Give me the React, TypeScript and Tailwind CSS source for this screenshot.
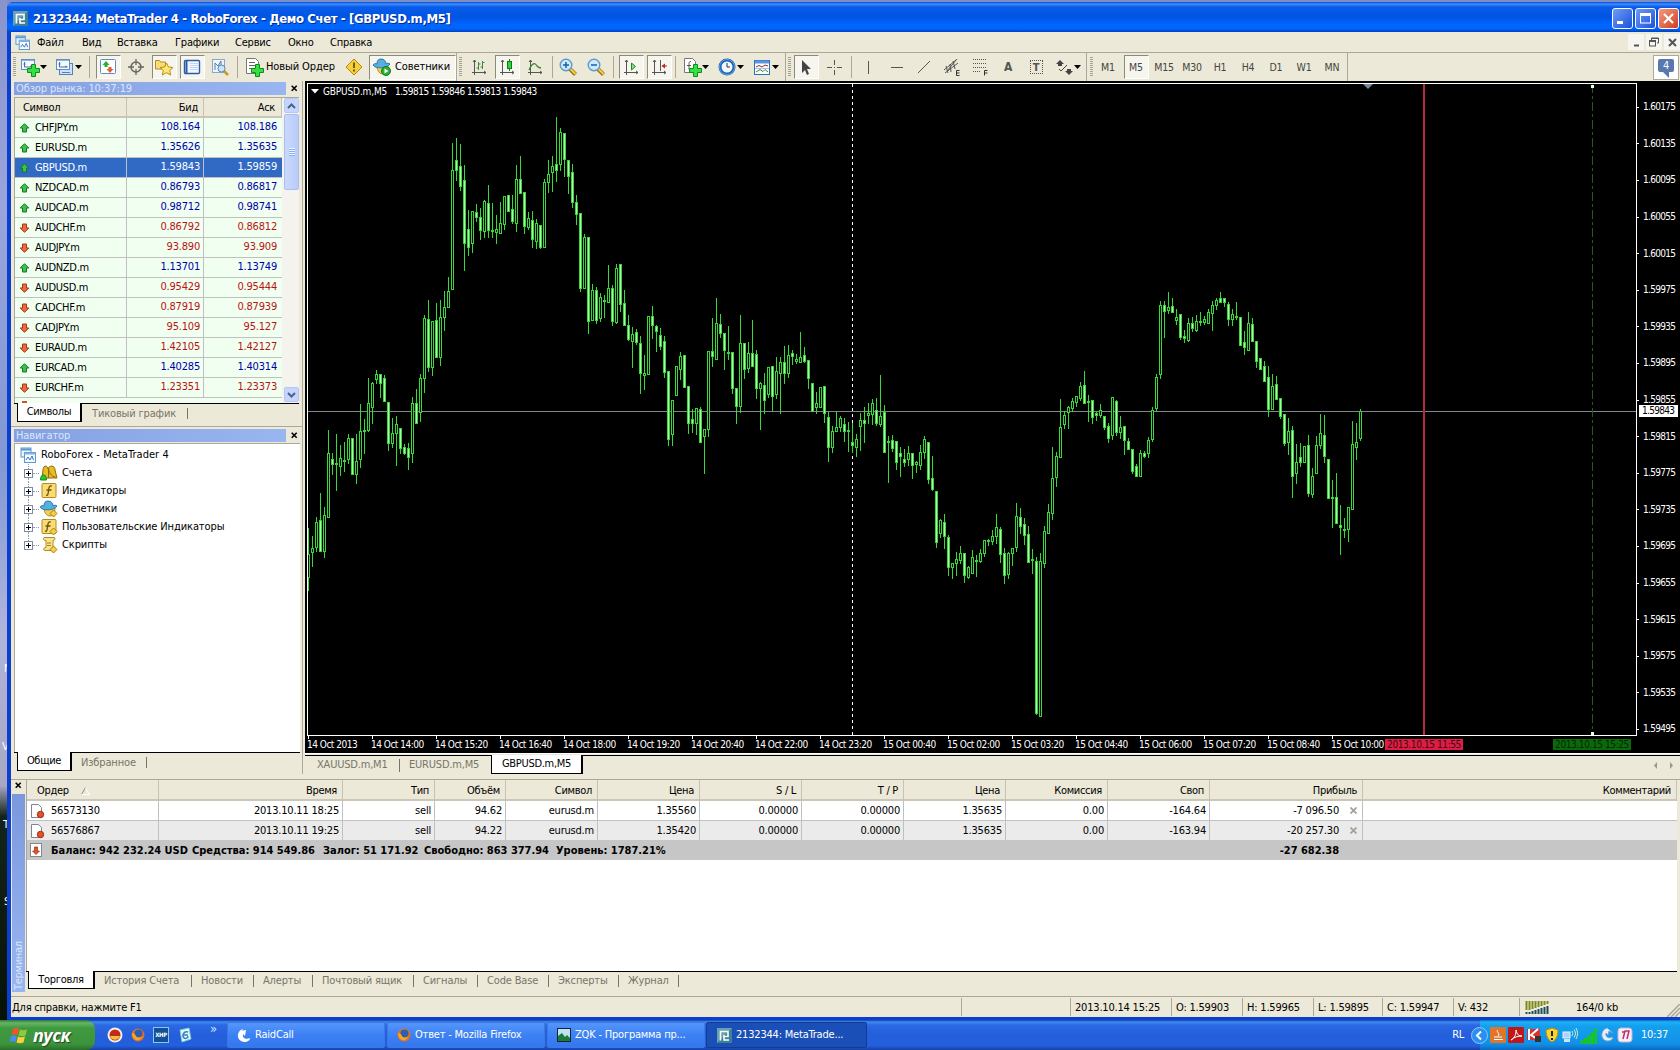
import React from "react";
import clsx from "clsx";

// [high, body top, body bottom, low, down bar]
const bars: number[][] = [
    [528, 554, 577, 590, 0], [536, 548, 552, 566, 0], [517, 522, 547, 551, 0], [493, 520, 551, 551, 1], [507, 515, 551, 557, 0],
    [430, 453, 517, 517, 0], [453, 459, 464, 474, 1], [434, 463, 464, 490, 0], [445, 458, 466, 475, 0], [442, 460, 461, 471, 0],
    [434, 438, 459, 463, 0], [438, 438, 474, 474, 1], [434, 461, 474, 483, 0], [404, 431, 459, 467, 0], [419, 430, 431, 453, 0],
    [378, 403, 430, 431, 0], [382, 383, 407, 423, 0], [370, 374, 379, 383, 0], [374, 374, 383, 397, 1], [375, 378, 401, 401, 1],
    [402, 402, 443, 450, 1], [418, 433, 443, 447, 0], [416, 424, 433, 465, 0], [428, 428, 448, 453, 1], [444, 447, 453, 454, 1],
    [443, 448, 457, 469, 1], [397, 403, 453, 462, 0], [389, 403, 423, 423, 1], [374, 378, 412, 421, 0], [315, 318, 378, 392, 0],
    [300, 319, 367, 371, 1], [321, 321, 367, 375, 0], [303, 320, 357, 357, 1], [300, 317, 357, 365, 0], [291, 307, 317, 330, 0],
    [277, 291, 307, 307, 0], [143, 170, 289, 289, 0], [138, 160, 170, 180, 1], [144, 166, 186, 190, 1], [165, 180, 243, 270, 1],
    [210, 229, 247, 255, 1], [211, 211, 243, 252, 0], [204, 212, 217, 221, 1], [208, 217, 230, 239, 1], [200, 201, 231, 237, 0],
    [185, 203, 230, 237, 1], [203, 230, 231, 237, 0], [215, 229, 232, 243, 0], [202, 223, 233, 233, 0], [196, 196, 224, 229, 0],
    [195, 195, 211, 211, 1], [195, 209, 221, 223, 1], [165, 179, 223, 231, 0], [156, 179, 193, 193, 1], [192, 192, 226, 233, 1],
    [212, 218, 227, 229, 0], [211, 220, 239, 247, 1], [219, 223, 241, 248, 0], [225, 225, 247, 248, 1], [179, 182, 247, 247, 0],
    [160, 174, 182, 192, 0], [156, 166, 172, 191, 0], [117, 164, 170, 181, 1], [128, 132, 164, 170, 0], [133, 133, 159, 176, 1],
    [160, 160, 176, 193, 1], [164, 172, 202, 207, 1], [195, 202, 214, 224, 1], [213, 213, 288, 291, 1], [234, 237, 288, 288, 0],
    [237, 237, 321, 333, 1], [284, 290, 320, 320, 0], [287, 290, 320, 323, 1], [293, 297, 318, 321, 0], [295, 300, 301, 317, 0],
    [265, 288, 302, 302, 0], [285, 288, 321, 325, 1], [264, 268, 322, 323, 0], [264, 264, 304, 311, 1], [290, 303, 325, 325, 1],
    [315, 325, 339, 340, 1], [327, 334, 341, 367, 0], [329, 332, 342, 344, 1], [336, 343, 373, 393, 1], [355, 373, 375, 389, 0],
    [316, 316, 374, 374, 0], [306, 316, 325, 338, 1], [325, 326, 331, 351, 1], [328, 335, 346, 349, 1], [336, 341, 372, 377, 1],
    [371, 371, 439, 445, 1], [400, 400, 434, 445, 0], [366, 366, 395, 395, 0], [352, 356, 369, 379, 0], [355, 355, 387, 387, 1],
    [386, 386, 423, 433, 1], [409, 419, 423, 432, 1], [408, 408, 423, 434, 0], [407, 409, 442, 442, 1], [429, 429, 436, 473, 0],
    [351, 351, 429, 436, 0], [318, 351, 356, 366, 1], [298, 323, 359, 359, 0], [314, 324, 333, 337, 1], [333, 333, 350, 369, 1],
    [326, 352, 353, 359, 0], [352, 352, 388, 393, 1], [388, 388, 406, 423, 1], [315, 343, 406, 412, 0], [343, 343, 369, 378, 1],
    [342, 353, 368, 372, 0], [320, 353, 366, 366, 1], [350, 354, 388, 398, 1], [382, 383, 388, 429, 0], [373, 385, 400, 413, 1],
    [367, 367, 394, 397, 0], [366, 366, 396, 410, 1], [357, 371, 394, 398, 0], [357, 362, 373, 413, 0], [346, 362, 373, 383, 1],
    [345, 355, 373, 377, 0], [350, 353, 356, 364, 1], [354, 359, 361, 363, 0], [332, 357, 362, 362, 0], [347, 355, 361, 362, 1],
    [360, 360, 378, 388, 1], [383, 383, 411, 411, 1], [392, 403, 407, 413, 0], [387, 387, 407, 407, 0], [386, 386, 413, 422, 1],
    [412, 417, 447, 461, 1], [426, 431, 447, 452, 0], [412, 427, 431, 431, 0], [416, 418, 427, 431, 0], [418, 424, 431, 441, 1],
    [422, 430, 431, 451, 0], [423, 442, 445, 452, 1], [434, 439, 447, 456, 0], [413, 420, 426, 450, 0], [407, 420, 423, 442, 1],
    [403, 413, 415, 423, 0], [399, 403, 414, 424, 0], [398, 410, 423, 425, 1], [375, 416, 424, 426, 0], [405, 412, 452, 452, 1],
    [436, 441, 442, 482, 0], [435, 440, 448, 451, 1], [441, 441, 462, 469, 1], [447, 453, 456, 476, 1], [449, 459, 462, 466, 1],
    [446, 453, 459, 465, 0], [453, 453, 465, 478, 1], [461, 462, 464, 472, 0], [445, 452, 465, 469, 0], [436, 439, 452, 458, 0],
    [442, 442, 479, 483, 1], [456, 478, 489, 490, 1], [491, 491, 542, 547, 1], [519, 520, 533, 537, 0], [514, 522, 536, 548, 1],
    [535, 537, 567, 575, 1], [563, 563, 567, 578, 0], [552, 559, 563, 575, 0], [546, 553, 560, 563, 0], [553, 553, 575, 582, 1],
    [566, 567, 577, 578, 0], [550, 557, 573, 573, 0], [555, 560, 561, 576, 0], [549, 553, 561, 562, 0], [540, 540, 553, 556, 0],
    [539, 540, 541, 545, 0], [530, 536, 541, 544, 0], [514, 527, 536, 543, 0], [527, 529, 554, 562, 1], [548, 553, 575, 583, 1],
    [552, 553, 574, 578, 0], [548, 548, 553, 565, 0], [503, 516, 547, 551, 0], [508, 517, 526, 533, 1], [518, 524, 535, 544, 1],
    [526, 534, 562, 562, 1], [549, 559, 560, 573, 0], [557, 561, 713, 714, 1], [553, 561, 716, 716, 0], [526, 531, 563, 567, 0],
    [504, 512, 533, 533, 0], [447, 478, 513, 519, 0], [452, 456, 477, 486, 0], [399, 427, 457, 457, 0], [411, 415, 424, 428, 0],
    [406, 407, 412, 428, 0], [398, 401, 408, 411, 0], [396, 396, 402, 406, 0], [382, 386, 398, 400, 0], [371, 385, 403, 403, 1],
    [395, 401, 402, 421, 0], [400, 400, 417, 423, 1], [412, 413, 415, 420, 1], [404, 410, 415, 417, 0], [416, 416, 427, 429, 1],
    [423, 426, 438, 442, 1], [397, 397, 435, 439, 0], [400, 401, 432, 435, 1], [416, 427, 432, 438, 0], [426, 426, 440, 454, 1],
    [438, 441, 449, 449, 1], [449, 449, 471, 473, 1], [464, 466, 476, 476, 1], [450, 453, 476, 476, 0], [451, 453, 456, 457, 1],
    [437, 440, 453, 457, 0], [407, 410, 439, 441, 0], [374, 377, 408, 411, 0], [301, 305, 374, 378, 0], [301, 305, 311, 337, 1],
    [292, 307, 310, 313, 0], [298, 306, 312, 312, 1], [309, 317, 320, 324, 0], [314, 314, 337, 339, 1], [330, 336, 338, 342, 1],
    [318, 323, 340, 341, 0], [317, 323, 328, 331, 1], [315, 321, 330, 331, 0], [312, 321, 322, 325, 0], [316, 319, 322, 324, 0],
    [309, 312, 323, 323, 0], [301, 305, 313, 330, 0], [298, 300, 305, 309, 0], [292, 298, 302, 302, 1], [298, 298, 302, 306, 1],
    [302, 304, 319, 325, 1], [309, 314, 319, 325, 0], [302, 316, 317, 319, 0], [317, 317, 345, 345, 1], [331, 342, 347, 354, 1],
    [312, 323, 350, 350, 0], [318, 324, 341, 341, 1], [341, 341, 361, 367, 1], [358, 358, 369, 369, 1], [361, 366, 381, 381, 1],
    [366, 377, 409, 416, 1], [374, 386, 409, 409, 0], [376, 384, 399, 399, 1], [398, 398, 416, 418, 1], [414, 414, 443, 445, 1],
    [418, 431, 442, 454, 0], [426, 430, 476, 497, 1], [444, 462, 473, 483, 0], [443, 457, 462, 466, 1], [446, 446, 462, 462, 0],
    [435, 445, 493, 496, 1], [468, 476, 494, 497, 0], [436, 445, 473, 473, 0], [414, 433, 445, 448, 0], [415, 435, 456, 462, 1],
    [459, 459, 498, 498, 1], [480, 497, 498, 527, 0], [473, 497, 523, 523, 1], [505, 525, 527, 554, 1], [518, 529, 530, 537, 0],
    [507, 507, 529, 541, 0], [421, 444, 509, 509, 0], [423, 442, 447, 459, 0], [409, 411, 438, 440, 0],
];

const times = [
    "14 Oct 14:00", "14 Oct 15:20", "14 Oct 16:40", "14 Oct 18:00", "14 Oct 19:20", "14 Oct 20:40", "14 Oct 22:00", "14 Oct 23:20",
    "15 Oct 00:40", "15 Oct 02:00", "15 Oct 03:20", "15 Oct 04:40", "15 Oct 06:00", "15 Oct 07:20", "15 Oct 08:40", "15 Oct 10:00",
];

const prices = [
    "1.60175", "1.60135", "1.60095", "1.60055", "1.60015", "1.59975", "1.59935", "1.59895", "1.59855",
    "1.59815", "1.59775", "1.59735", "1.59695", "1.59655", "1.59615", "1.59575", "1.59535", "1.59495",
];

const quotes = [
    { s: "CHFJPY.m", bid: "108.164", ask: "108.186", up: true },
    { s: "EURUSD.m", bid: "1.35626", ask: "1.35635", up: true },
    { s: "GBPUSD.m", bid: "1.59843", ask: "1.59859", up: true, sel: true },
    { s: "NZDCAD.m", bid: "0.86793", ask: "0.86817", up: true },
    { s: "AUDCAD.m", bid: "0.98712", ask: "0.98741", up: true },
    { s: "AUDCHF.m", bid: "0.86792", ask: "0.86812", up: false },
    { s: "AUDJPY.m", bid: "93.890", ask: "93.909", up: false },
    { s: "AUDNZD.m", bid: "1.13701", ask: "1.13749", up: true },
    { s: "AUDUSD.m", bid: "0.95429", ask: "0.95444", up: false },
    { s: "CADCHF.m", bid: "0.87919", ask: "0.87939", up: false },
    { s: "CADJPY.m", bid: "95.109", ask: "95.127", up: false },
    { s: "EURAUD.m", bid: "1.42105", ask: "1.42127", up: false },
    { s: "EURCAD.m", bid: "1.40285", ask: "1.40314", up: true },
    { s: "EURCHF.m", bid: "1.23351", ask: "1.23373", up: false },
];

const orderGrid = "grid grid-cols-[132px_184px_92px_71px_92px_102px_102px_102px_102px_102px_102px_153px_1fr]";

function Svg({ children, w = 20, h = 20 }: { children: React.ReactNode; w?: number; h?: number }) {
    return <svg width={w} height={h} viewBox={`0 0 ${w} ${h}`} className="shrink-0 block">{children}</svg>;
}

/* ---------- toolbar pieces ---------- */

const Plus = () => (
    <path transform="translate(7 7)" d="M4.500.500h4v4h4v4h-4v4h-4v-4h-4v-4h4z" fill="#34e044" stroke="#0f8c1a" />
);

const Caret = () => <Svg w={7} h={4}><path d="M0 0h7L3.500 4z" fill="#000" /></Svg>;

const Grip = () => (
    <div className="w-[3px] h-[20px] bg-[repeating-linear-gradient(#a5a292_0_1px,#ece9d8_1px_2px)]"></div>
);

function Slot({ on, children }: { on?: boolean; children: React.ReactNode }) {
    return (
        <div className="w-[28px] h-[28px] flex items-center justify-center shrink-0 text-[#444]">
            <div className={clsx("w-[25px] h-[24px] flex items-center justify-center", on && "bg-[#f6f5ee] border border-t-[#8d8a7c] border-l-[#8d8a7c] border-r-white border-b-white")}>
                {children}
            </div>
        </div>
    );
}

function Drop({ children }: { children: React.ReactNode }) {
    return (
        <div className="w-[35px] pl-px flex items-center shrink-0">
            {children}
            <Caret />
        </div>
    );
}

const Sep = ({ cls }: { cls: string }) => (
    <div className={clsx("h-[22px] shrink-0 flex", cls)}><div className="w-px h-full bg-[#aca899]"></div></div>
);

const ChartWin = () => (
    <>
        <rect x="1.5" y="2.5" width="13" height="10" fill="#f4f9ff" stroke="#5d8fc4" />
        <path d="M2 3.500h12" stroke="#8bb5e2" />
        <path d="M4.500 5v5h8M3.500 7h2M10 9l2 1" stroke="#4a6c92" fill="none" />
    </>
);

const Mag = ({ minus }: { minus?: boolean }) => (
    <Svg>
        <path d="M11.500 11.500l6 6" stroke="#9a7412" strokeWidth="4" />
        <path d="M12 11.500l5.500 5.500" stroke="#f5cf48" strokeWidth="2" />
        <circle cx="8" cy="8" r="5.800" fill="#cfe9fb" stroke="#5c9bce" strokeWidth="1.400" />
        <path d="M5 8h6" stroke="#1f68a8" strokeWidth="1.600" />
        {!minus && <path d="M8 5v6" stroke="#1f68a8" strokeWidth="1.600" />}
    </Svg>
);

const Axes = ({ children }: { children?: React.ReactNode }) => (
    <Svg>
        <path d="M5.500 3v15M3 15.500h14M4 5l1.500-2L7 5M15 14l2 1.500-2 1.500" stroke="#555" fill="none" />
        {children}
    </Svg>
);

const Hat = ({ badge = true }: { badge?: boolean }) => (
    <Svg>
        <path d="M5 9c0 5 3 8 6 8s5-3 5-8z" fill="#f3cf52" stroke="#b28a1c" />
        <path d="M1 8c2 4 14 4 17-1-1-1-3-1-4 0 0-3-2-5-5-5S5 4 5 7C3 6 2 7 1 8z" fill="#59aee0" stroke="#2f78ad" />
        {badge && <><circle cx="14" cy="14" r="4.500" fill="#27b030" stroke="#117a18" /><path d="M12.500 11.500v5l4-2.500z" fill="#fff" /></>}
        {!badge && <path d="M14.500 11l3.500 3.500-3.500 3.500-3.500-3.500z" fill="#f6cf45" stroke="#a57f18" />}
    </Svg>
);

const Terminals = ({ s = 16 }: { s?: number }) => (
    <svg width={s} height={s} viewBox="0 0 16 16" className="shrink-0 block">
        <rect x="1" y="1" width="10" height="9" fill="#eaf4ff" stroke="#5b97d0" />
        <path d="M1 2.500h10" stroke="#5b97d0" strokeWidth="2" />
        <rect x="4.500" y="5.500" width="11" height="10" fill="#f5faff" stroke="#5b97d0" />
        <path d="M4.500 6.500h11" stroke="#7fb0de" strokeWidth="2" />
        <path d="M6 13l2-3 2 3 2-4 1.500 4" stroke="#3c78b4" fill="none" />
    </svg>
);

const Logo = () => (
    <svg width="15" height="15" viewBox="0 0 15 15" className="shrink-0 block">
        <rect width="15" height="15" fill="#3f8096" />
        <path d="M0 0h15L0 15z" fill="#8fc3cf" opacity=".5" />
        <path d="M3.500 12.500V3.500h7.500v5H7M7 7v5h5" stroke="#fff" strokeWidth="1.600" fill="none" />
    </svg>
);

function Toolbar() {
    return (
        <div className="h-[28px] flex items-center bg-[#ece9d8] pl-[2px] text-[11px]">
            <div className="w-[6px] shrink-0"><Grip /></div>
            <Drop><Svg><ChartWin /><Plus /></Svg></Drop>
            <Drop>
                <Svg>
                    <rect x="4.500" y="6.500" width="13" height="11" fill="#cfe2f7" stroke="#4d83bf" />
                    <ChartWin />
                    <path d="M7 15.500h8" stroke="#4d83bf" />
                </Svg>
            </Drop>
            <Sep cls="w-[5px]" />
            <Slot on>
                <Svg>
                    <rect x="2.500" y="2.500" width="15" height="14" rx="1" fill="#fff" stroke="#5d8fc4" />
                    <path d="M8 4l3.500 4H9.500v2h-3V8h-2z" fill="#28b030" />
                    <path d="M12 16l3.500-4h-2v-2h-3v2h-2z" fill="#e0602c" />
                </Svg>
            </Slot>
            <Slot>
                <Svg>
                    <circle cx="10" cy="10" r="5" fill="none" stroke="#666" strokeWidth="1.500" />
                    <path d="M10 2v6M10 12v6M2 10h6M12 10h6" stroke="#666" strokeWidth="1.300" />
                </Svg>
            </Slot>
            <Slot on>
                <Svg>
                    <path d="M1.500 3.500h4l1 1.500h5v7h-10z" fill="#f8dc78" stroke="#b18d20" />
                    <path d="M12.500 6l2 4 4.500.500-3.300 3 1 4.500-4.200-2.300L8.300 18l1-4.500L6 10.500l4.500-.5z" fill="#ffe873" stroke="#b98d10" />
                </Svg>
            </Slot>
            <Slot on>
                <Svg>
                    <rect x="2.500" y="3.500" width="15" height="13" rx="1" fill="#f2f7ff" stroke="#2a5ca8" strokeWidth="1.400" />
                    <path d="M4.500 4v12" stroke="#2a5ca8" strokeWidth="2" />
                    <path d="M8 6.500h8M8 8.500h8M8 10.500h8M8 12.500h8" stroke="#c3d4ec" />
                </Svg>
            </Slot>
            <Slot>
                <Svg>
                    <rect x="2.500" y="2.500" width="12" height="13" fill="#eef4fb" stroke="#8ca7c6" />
                    <path d="M5 13V6l3 3 3-5v8" stroke="#5a7da6" fill="none" />
                    <path d="M14 14l4 4" stroke="#c99a28" strokeWidth="2.500" />
                    <circle cx="11.500" cy="11.500" r="3.500" fill="#c9e6fa" stroke="#4f89b9" />
                </Svg>
            </Slot>
            <Sep cls="w-[7px] pl-[3px]" />
            <div className="w-[97px] pl-[3px] flex items-center shrink-0">
                <Svg>
                    <path d="M2.500 1.500h9l3 3v12h-12z" fill="#fff" stroke="#777" />
                    <path d="M5 5.500h6M5 8.500h7M5 11.500h4" stroke="#666" />
                    <Plus />
                </Svg>
                <span className="pl-[2px] whitespace-nowrap tracking-[-0.1px]">Новый Ордер</span>
            </div>
            <div className="w-[31px] pl-[6px] shrink-0">
                <Svg>
                    <path d="M10 2l8 8-8 8-8-8z" fill="#f6cf3c" stroke="#b08a14" />
                    <path d="M10 5.500V11M10 12.500v2" stroke="#6b5208" strokeWidth="1.800" />
                </Svg>
            </div>
            <div className="w-[87px] h-[25px] pl-[2px] flex items-center shrink-0 bg-[#f6f5ee] border border-t-[#8d8a7c] border-l-[#8d8a7c] border-r-white border-b-white">
                <Hat />
                <span className="pl-[3px] whitespace-nowrap tracking-[-0.1px]">Советники</span>
            </div>
            <div className="w-[9px] h-full border-l border-[#aca899] flex items-center pl-[2px] shrink-0"><Grip /></div>
            <Slot><Axes><path d="M9.500 5v8M7.500 11h2M9.500 7h2M13.500 4v8M11.500 10h2M13.500 5.500h2" stroke="#3b8a3b" /></Axes></Slot>
            <Slot on><Axes><path d="M12.500 2v12" stroke="#0d7a16" /><rect x="10.500" y="4.500" width="4" height="7" fill="#35d040" stroke="#0d7a16" /></Axes></Slot>
            <Slot><Axes><path d="M4 13c3-7 6-8 8-4 1 1 3 2 4 2" stroke="#3b8a3b" fill="none" strokeWidth="1.300" /></Axes></Slot>
            <Sep cls="w-[5px] pl-[3px]" />
            <Slot><Mag /></Slot>
            <Slot><Mag minus /></Slot>
            <Sep cls="w-[7px] pl-[3px]" />
            <Slot on><Axes><path d="M10.500 6l4 3.500-4 3.500z" fill="#8be090" stroke="#1d8a26" /></Axes></Slot>
            <Slot on><Axes><path d="M11.500 3v11" stroke="#555" /><path d="M12.500 9l3.500-2.500v5z" fill="#b92424" /><path d="M15 9h3" stroke="#b92424" /></Axes></Slot>
            <Sep cls="w-[8px] pl-[2px]" />
            <Drop>
                <Svg>
                    <path d="M2.500 1.500h8l3 3v11h-11z" fill="#fff" stroke="#777" />
                    <path d="M9 4.500c-2 0-2 1-2 3v5M5 8.500h4" stroke="#555" fill="none" />
                    <Plus />
                </Svg>
            </Drop>
            <Drop>
                <Svg>
                    <circle cx="10" cy="10" r="7" fill="#f1f8ff" stroke="#1c63b4" strokeWidth="3" />
                    <circle cx="10" cy="10" r="7.500" fill="none" stroke="#5aa0e4" />
                    <path d="M10 6v4h3" stroke="#333" fill="none" />
                </Svg>
            </Drop>
            <div className="w-[34px] pl-px flex items-center shrink-0">
                <Svg>
                    <rect x="2.500" y="3.500" width="15" height="14" fill="#fff" stroke="#356fb3" />
                    <path d="M3 5h14" stroke="#5a96dc" strokeWidth="3" />
                    <path d="M4 10l3-1.500 3 1.500 3-2 3 1" stroke="#8d2f2f" fill="none" />
                    <path d="M4 15l4-2.500 3 2 2-2 3 2.500" stroke="#2c8a3a" fill="none" />
                    <path d="M3 11.500h14" stroke="#a7c3e6" />
                </Svg>
                <Caret />
            </div>
            <div className="w-[7px] h-full border-l border-[#aca899] flex items-center pl-[2px] shrink-0"><Grip /></div>
            <Slot on><Svg><path d="M6 3v13l3-3 2 5 2-1-2-5h4z" fill="#444" /></Svg></Slot>
            <Slot><Svg><path d="M10.500 3v5M10.500 13v5M3 10.500h5M13 10.500h5M10 10.500h1" stroke="#555" /></Svg></Slot>
            <Sep cls="w-[6px] pl-[3px]" />
            <Slot><Svg><path d="M10.500 4v13" stroke="#555" /></Svg></Slot>
            <Slot><Svg><path d="M5 10.500h12" stroke="#555" /></Svg></Slot>
            <Slot><Svg><path d="M4 16L16 4" stroke="#555" /></Svg></Slot>
            <Slot>
                <Svg>
                    <path d="M2 13L14 3M3 16L16 6M4 9l2 7M8 7l1 8M11 4l2 8M5 14L15 2" stroke="#555" />
                    <path d="M17.500 13.500h-3v5h3M14.500 16h3" stroke="#333" fill="none" />
                </Svg>
            </Slot>
            <Slot>
                <Svg>
                    <path d="M3 2.500h13M3 6.500h13M3 10.500h13M3 14.500h8" stroke="#555" strokeDasharray="1 1" />
                    <path d="M17.500 13.500h-3v5M14.500 16h3" stroke="#333" fill="none" />
                </Svg>
            </Slot>
            <Slot><span className="font-bold text-[12px] text-[#555]">A</span></Slot>
            <Slot>
                <span className="w-[13px] h-[14px] border border-dotted border-[#555] text-[11px] leading-[13px] text-center font-bold text-[#555]">T</span>
            </Slot>
            <div className="w-[36px] pl-[4px] flex items-center shrink-0">
                <Svg>
                    <path d="M6 3l4 4H8v2H4V7H2zM15 18l-4-4h2v-2h4v2h2z" fill="#444" />
                    <path d="M5 12l2 2 6-6" stroke="#444" fill="none" />
                </Svg>
                <Caret />
            </div>
            <div className="w-[8px] h-full border-l border-[#aca899] flex items-center pl-[3px] shrink-0"><Grip /></div>
            {["M1", "M5", "M15", "M30", "H1", "H4", "D1", "W1", "MN"].map((t) => (
                <Slot key={t} on={t === "M5"}><span className="text-[10.500px] tracking-[-0.2px]">{t}</span></Slot>
            ))}
            <div className="h-full w-px bg-[#aca899] ml-px"></div>
            <div className="ml-auto mr-px w-[26px] h-[25px] bg-white border border-[#aca899] flex items-center justify-center">
                <div className="relative w-[16px] h-[13px] bg-[#5878ae] rounded-[2px] text-white text-[11px] leading-[13px] text-center -mt-[3px]">
                    4
                    <div className="absolute left-[5px] top-[13px] border-[3px] border-transparent border-t-[#5878ae] border-r-[#5878ae]"></div>
                </div>
            </div>
        </div>
    );
}

/* ---------- left panels ---------- */

const Arrow = ({ up }: { up: boolean }) => (
    <svg width="11" height="10" viewBox="0 0 11 10" className="shrink-0 block">
        {up
            ? <path d="M5.500.700l4.300 4.300H7.500v4h-4V5H1.200z" fill="#3cc24c" stroke="#167a22" />
            : <path d="M5.500 9.300L9.800 5H7.500V1h-4v4H1.200z" fill="#ee6a3c" stroke="#a3381a" />}
    </svg>
);

function PanelTitle({ children }: { children: React.ReactNode }) {
    return (
        <div className="flex items-center h-[13px]">
            <div className="w-[272px] h-[13px] pl-[2px] bg-gradient-to-r from-[#84a0e2] to-[#9ab6f0] text-[#dbe6fb] text-[11px] leading-[13px] tracking-[-0.1px]">{children}</div>
            <div className="ml-[5px]"><CloseX /></div>
        </div>
    );
}

const CloseX = () => <Svg w={7} h={7}><path d="M.700 .7l5 5M5.700 .7l-5 5" stroke="#000" strokeWidth="1.600" /></Svg>;

function ScrollBtn({ up }: { up?: boolean }) {
    return (
        <div className="w-[15px] h-[15px] rounded-[2px] border border-[#b4c8f6] bg-[#c5d5fd] flex items-center justify-center">
            <Svg w={9} h={6}><path d={up ? "M1 5l3.500-3.500L8 5" : "M1 1l3.500 3.500L8 1"} stroke="#4d6185" strokeWidth="2" fill="none" /></Svg>
        </div>
    );
}

function MarketWatch() {
    return (
        <div className="h-[346px] pt-px pl-[3px] pr-[3px] flex flex-col border-b border-[#aca899]">
            <PanelTitle>Обзор рынка: 10:37:19</PanelTitle>
            <div className="mt-[2px] h-[306px] flex border-l border-t border-[#aca899] bg-[#f0fff0]">
                <div className="w-[267px] h-[305px] overflow-hidden shrink-0">
                    <div className="h-[20px] grid grid-cols-[112px_77px_1fr] bg-[#ece9d8] border-b-2 border-[#cbc7b8] leading-[20px]">
                        <span className="pl-[8px] border-r border-[#c6c3b4]">Символ</span>
                        <span className="pr-[5px] text-right border-r border-[#c6c3b4]">Бид</span>
                        <span className="pr-[6px] text-right border-r border-[#c6c3b4]">Аск</span>
                    </div>
                    {quotes.map((q) => (
                        <div key={q.s} className={clsx("h-[20px] grid grid-cols-[112px_77px_1fr] border-b border-[#c0c0c0] leading-[18px]", q.sel ? "bg-[#316ac5] text-white" : q.up ? "text-[#0000a8]" : "text-[#b81414]")}>
                            <span className={clsx("pl-[4px] flex items-center gap-[5px] border-r border-[#c0c0c0]", !q.sel && "text-black")}><Arrow up={q.up} />{q.s}</span>
                            <span className="pr-[3px] text-right border-r border-[#c0c0c0] tracking-[-0.2px]">{q.bid}</span>
                            <span className="pr-[5px] text-right tracking-[-0.2px]">{q.ask}</span>
                        </div>
                    ))}
                    <div className="pl-[7px] pt-[3px]"><div className="w-[5px] h-[2px] bg-[#c9552c]"></div></div>
                </div>
                <div className="flex-1 bg-[#f4f3ee] flex flex-col pl-[2px]">
                    <ScrollBtn up />
                    <div className="w-[15px] h-[76px] mt-px rounded-[2px] border border-[#a9bff0] bg-gradient-to-r from-[#cad8fd] to-[#b9cbf8] flex items-center justify-center">
                        <div className="w-[6px] h-[8px] bg-[repeating-linear-gradient(#eef4fe_0_1px,#8cb0f8_1px_2px)]"></div>
                    </div>
                    <div className="mt-auto mb-px"><ScrollBtn /></div>
                </div>
            </div>
            <div className="h-[19px] flex border-t border-black text-[#77756a]">
                <div className="ml-[3px] w-[65px] h-[19px] -mt-px bg-white border-2 border-t-0 border-black border-l-[1px] border-b-[1px] text-black text-center leading-[18px]">Символы</div>
                <span className="w-[105px] pl-[10px] leading-[19px] tracking-[-0.15px]">Тиковый график</span>
                <div className="w-px h-[11px] mt-[4px] bg-[#77756a]"></div>
            </div>
        </div>
    );
}

const treeIcons = [
    <Svg key="0">
        <path d="M4 7c0-5 5-5 5-1 1-4 7-4 7 1l2 8H3z" fill="#e9bb25" stroke="#8c6a0c" />
        <path d="M9.500 5c0 4 3 9 7 9M9.500 6v9" stroke="#8c6a0c" fill="none" />
        <path d="M1.500 17c0-7 6-7 6 0z" fill="#2bc437" stroke="#138a1c" />
    </Svg>,
    <Svg key="1">
        <rect x="3" y="2.500" width="14" height="14" rx="1" fill="#f9dd73" stroke="#b08b22" />
        <path d="M13 5c-3-1-3 2-3.500 5S9 15 7 14M7.500 9h5" stroke="#6b5210" fill="none" strokeWidth="1.300" />
    </Svg>,
    <Hat key="2" badge={false} />,
    <Svg key="3">
        <rect x="3" y="2.500" width="14" height="14" rx="1" fill="#f9dd73" stroke="#b08b22" />
        <path d="M12 5c-3-1-3 2-3.500 5S8 15 6 14M6.500 9h5" stroke="#6b5210" fill="none" strokeWidth="1.300" />
        <path d="M14.500 11l3.500 3.500-3.500 3.500-3.500-3.500z" fill="#f6cf45" stroke="#a57f18" />
    </Svg>,
    <Svg key="4">
        <path d="M5 2.500h10c2 0 1 3-1 3v7c2 0 3 3 0 3H6c-2 0-2-3 1-3v-7c-3 0-3-2-2-3z" fill="#f9e38c" stroke="#b08b22" />
        <path d="M8 8h4M8 10.500h4" stroke="#a57f18" />
        <path d="M14.500 11l3.500 3.500-3.500 3.500-3.500-3.500z" fill="#f6cf45" stroke="#a57f18" />
    </Svg>,
];

function Navigator() {
    const items = ["Счета", "Индикаторы", "Советники", "Пользовательские Индикаторы", "Скрипты"];
    return (
        <div className="flex-1 pt-[2px] pl-[3px] pr-[3px]">
            <PanelTitle>Навигатор</PanelTitle>
            <div className="mt-px h-[309px] w-[286px] border-l border-t border-[#aca899] bg-white pt-[2px] tracking-[-0.1px]">
                <div className="h-[18px] flex items-center pl-[5px] gap-[5px]"><Terminals /><span className="tracking-[0.05px]">RoboForex - MetaTrader 4</span></div>
                {items.map((t, i) => (
                    <div key={t} className="h-[18px] flex items-center pl-[9px]">
                        <div className="h-[18px] flex flex-col items-center">
                            <div className="h-[5px] border-l border-dotted border-[#999]"></div>
                            <Svg w={9} h={9}><rect x=".5" y=".5" width="8" height="8" fill="#fff" stroke="#7b8ca8" /><path d="M2 4.500h5M4.500 2v5" stroke="#000" /></Svg>
                            {i < 4 && <div className="h-[4px] border-l border-dotted border-[#999]"></div>}
                        </div>
                        <div className="w-[6px] border-t border-dotted border-[#999]"></div>
                        {treeIcons[i]}
                        <span className="pl-[3px]">{t}</span>
                    </div>
                ))}
            </div>
            <div className="h-[19px] w-[286px] flex border-t border-black text-[#77756a]">
                <div className="ml-[3px] w-[55px] h-[19px] -mt-px bg-white border-2 border-t-0 border-black border-l-[1px] border-b-[1px] text-black text-center leading-[18px]">Общие</div>
                <span className="w-[74px] pl-[9px] leading-[19px] tracking-[-0.15px]">Избранное</span>
                <div className="w-px h-[11px] mt-[4px] bg-[#77756a]"></div>
            </div>
        </div>
    );
}

/* ---------- chart ---------- */

function Plot() {
    return (
        <svg width="1330" height="653" viewBox="307 83 1330 653" className="block shrink-0" shapeRendering="crispEdges">
            <path d="M308 411.500h1328" stroke="#7e868e" />
            <path d="M852.500 84v651" stroke="#fff" strokeDasharray="3 3" />
            <g stroke="#38d838">
                {bars.map(([h, t, b, l, down], i) => {
                    const x = 308.5 + i * 4;
                    return (
                        <g key={i}>
                            <path d={`M${x} ${h}V${l + 1}`} />
                            <rect x={x - 1} y={t + 0.5} width="2" height={Math.max(b - t, 0.01)} fill={down ? "#b4f8b4" : "#000"} />
                            {b - t > 1 && <path d={`M${x} ${t + 1}V${b}`} stroke={down ? "#b4f8b4" : "#000"} />}
                        </g>
                    );
                })}
            </g>
            <path d="M1424 84v651" stroke="#bd2440" strokeWidth="2" />
            <path d="M1592.500 84v651" stroke="#235a23" strokeDasharray="9 3 3 3" />
            <rect x="1591" y="85" width="3" height="3" fill="#eaffea" />
            <rect x="1591" y="732" width="3" height="3" fill="#eaffea" />
            <path d="M1363 84h10l-5 5z" fill="#778899" shapeRendering="auto" />
            <path d="M307.500 736V83.500H1636.500V735.500H307" stroke="#fff" fill="none" />
        </svg>
    );
}

function Chart() {
    return (
        <div className="h-[672px] bg-black pl-[2px] pt-[2px] relative text-white text-[10px] tracking-[-0.5px]">
            <div className="flex h-[653px]">
                <Plot />
                <div className="pt-[6px] w-[43px] tracking-[-0.7px]">
                    {prices.map((p) => (
                        <div key={p} className="h-[36.6px] flex items-center">
                            <div className="w-[2px] h-px bg-white"></div>
                            <span className="pl-[4px]">{p}</span>
                        </div>
                    ))}
                </div>
            </div>
            <div className="flex h-[17px] pl-px leading-[14px] whitespace-nowrap">
                {["14 Oct 2013", ...times].map((t) => (
                    <div key={t} className="w-[64px]"><div className="w-px h-[3px] bg-white"></div><div className="-ml-px -mt-px">{t}</div></div>
                ))}
            </div>
            <div className="absolute left-[6px] top-[4px] flex items-center gap-[4px] h-[13px]">
                <Svg w={8} h={5}><path d="M0 0h8L4 4.500z" fill="#fff" /></Svg>
                <span className="w-[68px] tracking-[-0.15px]">GBPUSD.m,M5</span>
                <span>1.59815 1.59846 1.59813 1.59843</span>
            </div>
            <div className="absolute left-[1334px] top-[324px] w-[39px] h-[12px] bg-white text-black leading-[12px] pl-[3px] tracking-[-0.7px]">1.59843</div>
            <div className="absolute left-[1080px] top-[658px] w-[78px] h-[11px] bg-[#dc1e44] text-[#4a0010] leading-[11px] text-center tracking-[-0.4px]">2013.10.15 11:55</div>
            <div className="absolute left-[1248px] top-[658px] w-[78px] h-[11px] bg-[#0a6a0a] text-[#012801] leading-[11px] text-center tracking-[-0.4px]">2013.10.15 15:25</div>
        </div>
    );
}

function ChartTabs() {
    return (
        <div className="flex-1 bg-[#ece9d8] border-t border-white">
            <div className="mt-px h-[19px] border-t border-black flex items-center text-[#77756a]">
                <span className="w-[94px] pl-[12px] tracking-[-0.2px]">XAUUSD.m,M1</span>
                <div className="w-px h-[13px] bg-[#77756a]"></div>
                <span className="w-[91px] pl-[9px] tracking-[-0.2px]">EURUSD.m,M5</span>
                <div className="w-[92px] h-[19px] -mt-px bg-white border-2 border-t-0 border-black border-l-[1px] border-b-[1px] text-black text-center leading-[18px]">GBPUSD.m,M5</div>
                <div className="ml-auto pr-[6px] flex gap-[11px]">
                    <Svg w={5} h={7}><path d="M4 0v7L1 3.500z" fill="#9a978a" /></Svg>
                    <Svg w={5} h={7}><path d="M1 0v7l3-3.500z" fill="#9a978a" /></Svg>
                </div>
            </div>
        </div>
    );
}

/* ---------- terminal ---------- */

const heads = ["Время", "Тип", "Объём", "Символ", "Цена", "S / L", "T / P", "Цена", "Комиссия", "Своп", "Прибыль", "Комментарий"];

const orders = [
    { id: "56573130", cells: ["2013.10.11 18:25", "sell", "94.62", "eurusd.m", "1.35560", "0.00000", "0.00000", "1.35635", "0.00", "-164.64"], profit: "-7 096.50" },
    { id: "56576867", cells: ["2013.10.11 19:25", "sell", "94.22", "eurusd.m", "1.35420", "0.00000", "0.00000", "1.35635", "0.00", "-163.94"], profit: "-20 257.30" },
];

function Terminal() {
    return (
        <div className="h-[216px] flex bg-[#ece9d8] border-t border-[#aca899]">
            <div className="w-[15px] pl-px shrink-0">
                <div className="pl-[3px] pt-[2px] h-[14px]"><CloseX /></div>
                <div className="w-[13px] h-[198px] bg-gradient-to-b from-[#9ab6f0] to-[#7b98dd] text-[#dbe6fb] [writing-mode:vertical-rl] rotate-180 leading-[13px] pt-[2px]">Терминал</div>
            </div>
            <div className="flex-1 mr-[3px]">
                <div className="h-[191px] bg-white border-l border-[#aca899]">
                    <div className={clsx(orderGrid, "h-[21px] bg-[#ece9d8] border-b-2 border-[#cbc7b8] leading-[21px]")}>
                        <span className="pl-[10px] border-r border-[#c6c3b4] flex items-center gap-[12px]">Ордер<Svg w={9} h={8}><path d="M.500 7.500L4.500.500" stroke="#8d8a7c" /><path d="M4.500 1l4 6.500h-8" stroke="#fff" fill="none" /></Svg></span>
                        {heads.map((h, i) => (
                            <span key={i} className="pr-[5px] text-right border-r border-[#c6c3b4]">{h}</span>
                        ))}
                    </div>
                    {orders.map((o, i) => (
                        <div key={o.id} className={clsx(orderGrid, "leading-[19px] tracking-[-0.2px]", i ? "h-[19px] bg-[#ebebeb]" : "h-[20px] border-b border-[#c0c0c0]")}>
                            <span className="pl-[3px] border-r border-[#c0c0c0] flex items-center gap-[6px]">
                                <Svg w={15} h={16}>
                                    <path d="M1.500 1.500h7l3 3v10h-10z" fill="#fff" stroke="#7c8592" />
                                    <circle cx="10.500" cy="11.500" r="3.200" fill="#e4512a" stroke="#9c2e12" />
                                </Svg>
                                {o.id}
                            </span>
                            {o.cells.map((c, k) => <span key={k} className="pr-[3px] text-right border-r border-[#c0c0c0]">{c}</span>)}
                            <span className="pr-[5px] border-r border-[#c0c0c0] flex items-center justify-end gap-[11px]">
                                {o.profit}
                                <Svg w={7} h={7}><path d="M.500.500l6 6M6.500.500l-6 6" stroke="#a3a297" strokeWidth="1.800" /></Svg>
                            </span>
                            <span></span>
                        </div>
                    ))}
                    <div className="h-[20px] pt-px bg-[#c6c6c6] flex items-center font-bold whitespace-nowrap tracking-[-0.02px]">
                        <div className="w-[24px] pl-[3px]">
                            <Svg w={13} h={15}><rect x=".5" y=".5" width="11" height="13" fill="#fff" stroke="#888" /><path d="M6 11.500l3.500-3.500H7.500V4h-3v4h-2z" fill="#e4512a" stroke="#9c2e12" strokeWidth=".7" /></Svg>
                        </div>
                        <span className="w-[141px]">Баланс: 942 232.24 USD</span>
                        <span className="w-[131px]">Средства: 914 549.86</span>
                        <span className="w-[101px]">Залог: 51 171.92</span>
                        <span className="w-[132px]">Свободно: 863 377.94</span>
                        <span>Уровень: 1787.21%</span>
                        <span className="ml-auto pr-[338px]">-27 682.38</span>
                    </div>
                </div>
                <div className="h-[18px] border-t border-black flex items-center text-[#77756a] whitespace-nowrap">
                    <div className="ml-[2px] w-[67px] h-[18px] bg-white border-2 border-t-0 border-black border-l-[1px] border-b-[1px] text-black text-center leading-[17px] -mt-px">Торговля</div>
                    {[
                        ["История Счета", "w-[97px]"], ["Новости", "w-[62px]"], ["Алерты", "w-[59px]"], ["Почтовый ящик", "w-[101px]"],
                        ["Сигналы", "w-[64px]"], ["Code Base", "w-[71px]"], ["Эксперты", "w-[70px]"], ["Журнал", "w-[60px]"],
                    ].map(([t, w]) => (
                        <div key={t} className={clsx("flex items-center justify-between pl-[9px] tracking-[-0.15px]", w)}>
                            {t}<div className="w-px h-[12px] bg-[#77756a]"></div>
                        </div>
                    ))}
                </div>
            </div>
        </div>
    );
}

function StatusBar() {
    return (
        <div className="h-[21px] mt-px border-t border-[#aca899] flex items-center bg-[#ece9d8] leading-[19px] whitespace-nowrap tracking-[-0.2px]">
            <span className="w-[950px] pl-px">Для справки, нажмите F1</span>
            {[
                ["", "w-[109px]"], ["2013.10.14 15:25", "w-[101px]"], ["O: 1.59903", "w-[71px]"], ["H: 1.59965", "w-[71px]"],
                ["L: 1.59895", "w-[69px]"], ["C: 1.59947", "w-[71px]"], ["V: 432", "w-[66px]"],
            ].map(([t, w], i) => (
                <span key={i} className={clsx("border-l border-[#aca899] pl-[4px] h-[18px]", w)}>{t}</span>
            ))}
            <div className="border-l border-[#aca899] pl-[5px] h-[18px] flex items-center">
                <Svg w={24} h={13}>
                    <path d="M1.500 0v9M4.500 0v9M7.500 0v8M10.500 0v7M13.500 0v6M16.500 0v5M19.500 0v4M22.500 0v3" stroke="#7c8a1c" strokeWidth="2" />
                    <path d="M1.500 11v2M4.500 11v2M7.500 10v3M10.500 9v4M13.500 8v5M16.500 7v6M19.500 6v7M22.500 5v8" stroke="#1d4e5c" strokeWidth="2" />
                </Svg>
                <span className="pl-[27px]">164/0 kb</span>
            </div>
            <div className="ml-auto self-end"><Svg w={13} h={13}><path d="M0 13L13 0M4 13l9-9M8 13l5-5" stroke="#aca899" strokeWidth="1.500" /></Svg></div>
        </div>
    );
}

/* ---------- desktop taskbar ---------- */

const Firefox = () => (
    <Svg w={14} h={14}>
        <circle cx="7" cy="7" r="6.500" fill="#e8701c" />
        <circle cx="7.500" cy="5.500" r="4" fill="#2c5fb4" />
        <path d="M1 5c2 0 3 1 4 3s4 2 6 0c-1 4-4 5-6 4S1 9 1 5z" fill="#f5a623" />
    </Svg>
);

function TaskBtn({ icon, on, cls, children }: { icon: React.ReactNode; on?: boolean; cls: string; children: React.ReactNode }) {
    return (
        <div className={clsx("h-[26px] rounded-[2px] flex items-center gap-[4px] shrink-0 whitespace-nowrap text-white text-[11px]", cls,
            on ? "bg-[#1b4fb8] border border-[#123c94]" : "bg-gradient-to-b from-[#5596fb] via-[#3c81f3] to-[#3577ec] border border-[#3a78e6]")}>
            {icon}<span className="tracking-[-0.2px]">{children}</span>
        </div>
    );
}

function Taskbar() {
    return (
        <div className="h-[30px] flex items-center bg-[linear-gradient(#1941a5_0,#3f8cf3_2px,#2b69e4_5px,#245edb_50%,#2360de_85%,#1941a5_100%)]">
            <div className="w-[95px] h-[30px] rounded-r-[9px] flex items-center pl-[9px] bg-[linear-gradient(#2f7a2f_0,#67b567_3px,#3f9a3f_8px,#3c943c_80%,#2a6e2a_100%)]">
                <Svg w={20} h={19}>
                    <path d="M4 3c3-2 4-1 6 0L8.500 9C7 8 5 8 2.500 9z" fill="#f0562a" />
                    <path d="M11 3.500c2 1 4 1 7 0L16.500 9.500c-3 1-5 1-7 0z" fill="#8ccc3c" />
                    <path d="M2 10c2-1 4-1 6 0l-1.500 6c-2-1-4-1-6 0z" fill="#4a8df2" />
                    <path d="M9 10.500c2 1 4 1 7 0l-1.500 6c-3 1-5 1-7 0z" fill="#fad03c" />
                </Svg>
                <span className="pl-[4px] italic font-bold text-[18px] leading-[20px] text-white tracking-[-0.5px] font-['Open_Sans'] [text-shadow:1px_1px_1px_#1c4a1c]">пуск</span>
            </div>
            <div className="w-[132px] pl-[12px] flex items-center gap-[8px] shrink-0">
                <Svg w={16} h={16}><circle cx="8" cy="8" r="7.500" fill="#f3efe4" /><circle cx="8" cy="8" r="5.500" fill="#c22a1c" /><path d="M3 9h10c-1 5-9 5-10 0z" fill="#f2c23c" /></Svg>
                <Firefox />
                <div className="w-[16px] h-[16px] bg-[#12509a] border border-[#8fc6f0] text-[6px] leading-[14px] text-center font-bold text-white">XHP</div>
                <Svg w={16} h={16}><path d="M3 3l9-2 2 11-9 3z" fill="#e8f5ff" stroke="#7cc" /><path d="M11 5c-5-1-6 4-4 6 2 1 4 0 4-2M6 8h5" stroke="#2d87b8" strokeWidth="1.500" fill="none" /></Svg>
                <span className="text-[#cfe2ff] text-[13px] -mt-[12px] pl-[9px]">»</span>
            </div>
            <TaskBtn cls="w-[158px] pl-[8px]" icon={<Svg w={15} h={15}><path d="M7 1C0 3 0 13 8 14c4 0 6-2 6-4-4 2-8 0-7-4l2 2 1-6-7 1 2 1z" fill="#fff" /></Svg>}>RaidCall</TaskBtn>
            <TaskBtn cls="w-[158px] ml-[2px] pl-[9px]" icon={<Firefox />}>Ответ - Mozilla Firefox</TaskBtn>
            <TaskBtn cls="w-[158px] ml-[2px] pl-[9px]" icon={<Svg w={14} h={14}><rect x=".5" y=".5" width="13" height="13" fill="#bfe3f5" stroke="#123" /><path d="M1 8l4-3 3 4 2-2 3 3v3H1z" fill="#1d7a3a" /></Svg>}>ZQK - Программа пр...</TaskBtn>
            <TaskBtn on cls="w-[161px] ml-px pl-[10px]" icon={<Logo />}>2132344: MetaTrade...</TaskBtn>
            <span className="ml-auto text-white text-[11px] pr-[6px]">RL</span>
            <div className="relative w-[200px] h-[30px] pl-[10px] ml-[10px] flex items-center gap-[2px] bg-[linear-gradient(#0d6ac4_0,#1db2f5_2px,#14a0ee_6px,#1290e8_80%,#0c68c0_100%)]">
                <div className="absolute -left-[9px] top-[7px]">
                    <Svg w={17} h={17}><circle cx="8.500" cy="8.500" r="8" fill="#2a8ff0" stroke="#8cc8fa" /><path d="M10 4.500l-4 4 4 4" stroke="#fff" strokeWidth="2" fill="none" /></Svg>
                </div>
                <Svg w={16} h={16}><rect width="16" height="16" rx="1" fill="#e0762a" /><path d="M8 3c-3 2 3 3 0 6M4 10h8M4 12.500h9" stroke="#fff" fill="none" /></Svg>
                <Svg w={16} h={16}><rect width="16" height="16" rx="1" fill="#c01818" /><path d="M3 13c4-2 5-6 5-10 1 5 3 6 6 6-4 0-8 1-11 4" stroke="#fff" fill="none" /></Svg>
                <Svg w={16} h={16}><path d="M1 2h13v11H1z" fill="#d8322a" /><path d="M3 2v11M12 2L5 8l8 5" stroke="#fff" strokeWidth="2" fill="none" /><rect x="9" y="9" width="6" height="6" fill="#333" /></Svg>
                <Svg w={16} h={16}><path d="M8 1l6 2c0 6-2 10-6 12C4 13 2 9 2 3z" fill="#f8d430" stroke="#b58c0c" /><path d="M8 4v5M8 11v2" stroke="#222" strokeWidth="2" /></Svg>
                <Svg w={16} h={16}><rect x="1" y="5" width="7" height="6" fill="#a9d4fa" stroke="#e6f3ff" /><rect x="2" y="12" width="6" height="3" fill="#cfe4f7" /><path d="M10 4c1 2 1 3 0 5M12 2.500c2 3 2 5 0 8M14 1c2 4 2 7 0 11" stroke="#d7f5c8" fill="none" /></Svg>
                <Svg w={17} h={17}><path d="M2 17v-4M5.500 17v-6M9 17V8M12.500 17V5M16 17V1" stroke="#17c81e" strokeWidth="3" /></Svg>
                <Svg w={16} h={16}><path d="M8 1C1 3 1 13 8 14c4 0 6-2 6-4-4 2-8 0-7-4l2 2 1-4 4 2" fill="#e4eefb" stroke="#7aa0cc" /></Svg>
                <Svg w={16} h={16}><rect x="1" y="1" width="14" height="14" rx="3" fill="#f4f0f8" stroke="#c9b0d0" /><path d="M6 12l2-8h4l-2 8M5 5h3" stroke="#c0306a" strokeWidth="1.500" fill="none" /></Svg>
                <span className="text-white text-[11px] pl-[6px]">10:37</span>
            </div>
        </div>
    );
}

/* ---------- window ---------- */

function TitleBar() {
    const btn = "w-[21px] h-[21px] rounded-[3px] border border-white flex items-center justify-center";
    return (
        <div className="h-[30px] rounded-tl-[6px] flex items-center pl-[6px] bg-[linear-gradient(#0a48d8_0,#3a90ff_2px,#0a5ce8_5px,#0054e3_50%,#0066ff_75%,#0064f8_90%,#003fc4_100%)]">
            <div className="pt-[2px]"><Logo /></div>
            <span className="pl-[5px] mt-[3px] flex-1 text-white font-bold text-[13px] tracking-[-0.37px] [text-shadow:1px_1px_0_#0a2a8c]">2132344: MetaTrader 4 - RoboForex - Демо Счет - [GBPUSD.m,M5]</span>
            <div className="flex gap-[2px] pr-px mt-[3px]">
                <div className={clsx(btn, "bg-gradient-to-br from-[#6f9bf8] to-[#1c50d8]")}><Svg w={13} h={13}><path d="M1 10.500h6" stroke="#fff" strokeWidth="3" /></Svg></div>
                <div className={clsx(btn, "bg-gradient-to-br from-[#6f9bf8] to-[#1c50d8]")}><Svg w={13} h={13}><rect x="1.500" y="2" width="10" height="9" fill="none" stroke="#fff" /><path d="M1 2.500h11" stroke="#fff" strokeWidth="3" /></Svg></div>
                <div className={clsx(btn, "bg-gradient-to-br from-[#f09a80] to-[#d2381a]")}><Svg w={13} h={13}><path d="M2 2l9 9M11 2l-9 9" stroke="#fff" strokeWidth="2.200" /></Svg></div>
            </div>
        </div>
    );
}

function MenuBar() {
    const mdi = "w-[16px] h-[16px] bg-[#f6f5f0] flex items-center justify-center";
    return (
        <div className="h-[20px] flex items-center pl-[4px] bg-[#ece9d8]">
            <Terminals s={15} />
            <div className="flex pl-[7px] pt-px whitespace-nowrap tracking-[-0.2px]">
                {[
                    ["Файл", "w-[45px]"], ["Вид", "w-[35px]"], ["Вставка", "w-[58px]"], ["Графики", "w-[60px]"],
                    ["Сервис", "w-[53px]"], ["Окно", "w-[42px]"], ["Справка", "w-[60px]"],
                ].map(([t, w]) => <span key={t} className={w}>{t}</span>)}
            </div>
            <div className="ml-auto flex gap-[2px]">
                <div className={mdi}><Svg w={9} h={9}><path d="M2 7.500h5" stroke="#555" strokeWidth="2" /></Svg></div>
                <div className={mdi}><Svg w={10} h={10}><path d="M2.500 3V1h7v5H8M2 1.500h8" stroke="#555" fill="none" /><rect x=".5" y="4" width="6" height="5" fill="none" stroke="#555" /><path d="M0 4h7" stroke="#555" strokeWidth="2" /></Svg></div>
                <div className={mdi}><Svg w={9} h={9}><path d="M1 1l7 7M8 1L1 8" stroke="#555" strokeWidth="2" /></Svg></div>
            </div>
        </div>
    );
}

export default function App() {
    return (
        <div className="w-[1680px] h-[1050px] overflow-hidden flex flex-col text-black text-[11px] leading-[14px] tracking-[-0.3px] font-['DejaVu_Sans_Condensed','DejaVu_Sans',sans-serif]">
            <div className="h-[1020px] flex bg-[#7d8fc4]">
                <div className="w-[7px] shrink-0 overflow-hidden text-white flex flex-col bg-[linear-gradient(#8a94cc_0,#9aa4dc_20%,#8098d4_45%,#b0b4dc_62%,#a8a8c4_77%,#13251a_80%,#061208_100%)]">
                    <span className="mt-[662px] pl-[4px]">N</span>
                    <span className="mt-[64px] pl-[2px]">V</span>
                    <span className="mt-[64px] pl-[3px]">T</span>
                    <span className="mt-[63px] pl-[4px]">S</span>
                </div>
                <div className="flex-1 mt-[2px] flex flex-col rounded-tl-[7px] bg-[#0b3fd0] pb-[3px]">
                    <TitleBar />
                    <div className="ml-[4px] flex-1 flex flex-col bg-[#ece9d8]">
                        <MenuBar />
                        <div className="h-px bg-[#aca899]"></div>
                        <Toolbar />
                        <div className="flex flex-1 pb-[5px]">
                            <div className="w-[292px] shrink-0 flex flex-col border-r border-[#aca899]">
                                <MarketWatch />
                                <Navigator />
                            </div>
                            <div className="ml-[2px] flex-1 flex flex-col">
                                <Chart />
                                <ChartTabs />
                            </div>
                        </div>
                        <Terminal />
                        <StatusBar />
                    </div>
                </div>
            </div>
            <Taskbar />
        </div>
    );
}
